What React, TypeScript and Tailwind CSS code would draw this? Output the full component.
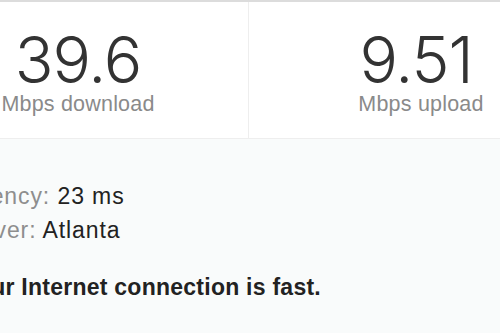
import React from "react";

export default function App() {
  return (
    <div className="w-[500px] h-[333px] overflow-hidden bg-[#f9fbfb] font-['Liberation_Sans',Arial,sans-serif]">
      <div className="-ml-[92px] w-[682px]">
        <div className="flex h-[139px] bg-white border-t-2 border-t-[#dcdcdc] border-b border-b-[#eeeeee]">
          <div className="w-1/2 flex flex-col items-center pt-[26px] border-r border-r-[#eeeeee]">
            <div className="text-[64px] leading-[64px] font-light text-[#333333] font-['Inter',sans-serif] tracking-[-1px]">39.6</div>
            <div className="text-[21.5px] leading-[24px] text-[#8a8a8a] tracking-[0.2px]">Mbps download</div>
          </div>
          <div className="w-1/2 flex flex-col items-center pt-[26px] pl-[3px]">
            <div className="text-[64px] leading-[64px] font-light text-[#333333] font-['Inter',sans-serif] tracking-[-1px] pr-[10px]">9.51</div>
            <div className="text-[21.5px] leading-[24px] text-[#8a8a8a] tracking-[0.2px]">Mbps upload</div>
          </div>
        </div>
        <div className="pl-[48px] pt-[40px] text-[23px] tracking-[0.9px]">
          <div className="leading-[34px]">
            <span className="text-[#8e8e8e]">Latency: </span>
            <span className="text-[#222222]">23 ms</span>
          </div>
          <div className="leading-[34px]">
            <span className="text-[#8e8e8e]">Server: </span>
            <span className="text-[#222222]">Atlanta</span>
          </div>
          <div className="mt-[23px] ml-[7px] font-bold text-[#222222] leading-[34px] tracking-[0.25px]">Your Internet connection is fast.</div>
        </div>
      </div>
    </div>
  );
}
